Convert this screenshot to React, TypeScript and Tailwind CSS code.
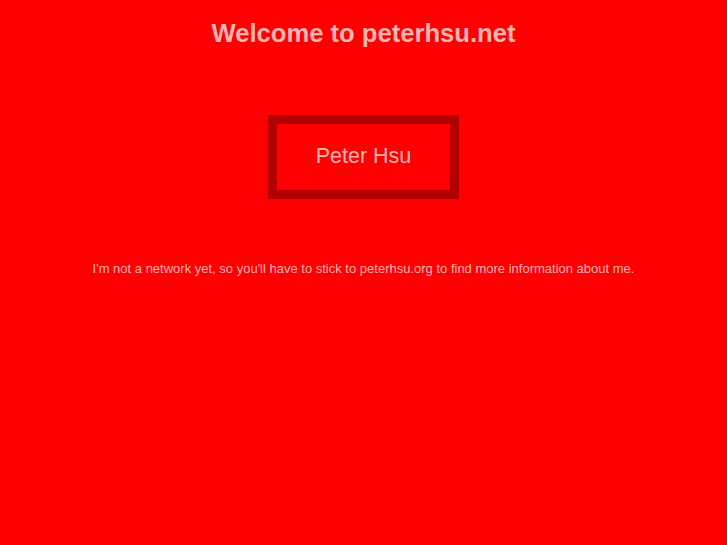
export default function App() {
  return (
    <div className="min-h-[545px] bg-[#ff0000] font-['Liberation_Sans',Arial,sans-serif] text-[#ffb3b3] flex flex-col items-center">
      <h1 className="mt-[18px] text-[25.6px] leading-[30px] font-bold">Welcome to peterhsu.net</h1>
      <div className="mt-[67px] w-[191px] h-[84px] border-[9px] border-[#b30000] flex items-center justify-center">
        <span className="text-[21.5px] leading-[24px] -mt-[2px]">Peter Hsu</span>
      </div>
      <p className="mt-[62px] text-[13px] leading-[16px]">
        I'm not a network yet, so you'll have to stick to peterhsu.org to find more information about me.
      </p>
    </div>
  )
}
